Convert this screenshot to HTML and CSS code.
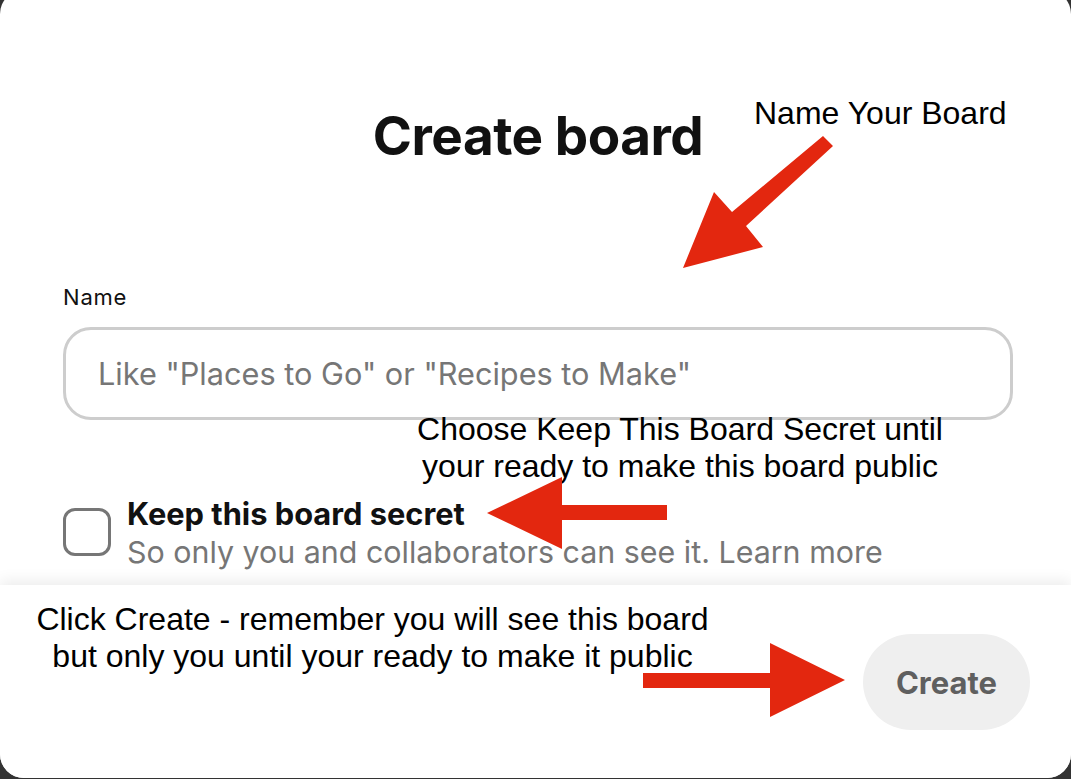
FILE: index.html
```html
<!DOCTYPE html>
<html lang="en">
<head>
    <meta charset="UTF-8">
    <meta name="viewport" content="width=device-width, initial-scale=1.0">
    <title>Create board</title>
    <link rel="stylesheet" href="styles.css">
</head>
<body>
    <div class="modal">
        <div class="modal-body">
            <h1 class="title">Create board</h1>
            <label class="field-label" for="board-name">Name</label>
            <input class="text-input" id="board-name" type="text" placeholder='Like "Places to Go" or "Recipes to Make"'>
            <div class="secret-row">
                <span class="checkbox"></span>
                <div class="secret-text">
                    <div class="secret-title">Keep this board secret</div>
                    <div class="secret-sub">So only you and collaborators can see it. Learn more</div>
                </div>
            </div>
        </div>
        <div class="modal-footer">
            <button class="create-btn">Create</button>
        </div>
    </div>

    <!-- Annotations drawn over the dialog -->
    <div class="note note-name">Name Your Board</div>
    <div class="note note-secret">Choose Keep This Board Secret until<br>your ready to make this board public</div>
    <div class="note note-create">Click Create - remember you will see this board<br>but only you until your ready to make it public</div>
    <svg class="arrows" width="1071" height="779" viewBox="0 0 1071 779">
        <polygon points="823,136 833,146 746,226 763,247 683,268 714,192 732,212" />
        <polygon points="487,513 562,477 562,505 667,505 667,520 562,520 562,549" />
        <polygon points="643,673 770,673 770,643 845,680 770,717 770,688 643,688" />
    </svg>
</body>
</html>
```

FILE: styles.css
```css
html, body {
    margin: 0;
    padding: 0;
    height: 100%;
}
body {
    background: #333333;
    display: flex;
    flex-direction: column;
    position: relative;
    overflow: hidden;
    font-family: Inter, "Noto Sans", sans-serif;
    color: #111111;
}
.modal {
    margin-top: -10px;
    height: 788px;
    width: 100%;
    background: #ffffff;
    border-radius: 24px;
    display: flex;
    flex-direction: column;
    overflow: hidden;
}
.modal-body {
    flex: 1;
    padding: 114px 58px 0 63px;
    display: flex;
    flex-direction: column;
}
.title {
    margin: 0;
    text-align: center;
    font-size: 53px;
    font-weight: 700;
    line-height: 64px;
    letter-spacing: -0.5px;
}
.field-label {
    margin-top: 117px;
    font-size: 22px;
    line-height: 24px;
    letter-spacing: 0.8px;
}
.text-input {
    margin-top: 18px;
    height: 93px;
    box-sizing: border-box;
    border: 3px solid #cdcdcd;
    border-radius: 28px;
    padding: 0 32px;
    font-family: inherit;
    font-size: 30.7px;
    color: #111111;
    outline: none;
}
.text-input::placeholder {
    color: #767676;
}
.secret-row {
    margin-top: 86px;
    display: flex;
    gap: 16px;
}
.checkbox {
    width: 48px;
    height: 48px;
    box-sizing: border-box;
    border: 3px solid #767676;
    border-radius: 12px;
    margin-top: 2px;
    flex-shrink: 0;
}
.secret-title {
    font-size: 30.8px;
    font-weight: 700;
    line-height: 38px;
    margin-top: -11px;
}
.secret-sub {
    font-size: 30.4px;
    line-height: 38px;
    color: #767676;
}
.modal-footer {
    height: 193px;
    box-sizing: border-box;
    padding: 49px 41px 0 0;
    display: flex;
    justify-content: flex-end;
    align-items: flex-start;
    background: #ffffff;
    box-shadow: 0 -4px 14px rgba(0, 0, 0, 0.08);
}
.create-btn {
    height: 96px;
    padding: 0 33px;
    border: none;
    border-radius: 48px;
    background: #efefef;
    color: #5f5f5f;
    font-family: inherit;
    font-size: 31px;
    font-weight: 700;
}
.note {
    position: absolute;
    font-family: "Liberation Sans", Arial, sans-serif;
    font-size: 32px;
    line-height: 37px;
    color: #000000;
    white-space: nowrap;
}
.note-name {
    left: 754px;
    top: 95px;
}
.note-secret {
    left: 380px;
    width: 600px;
    top: 411px;
    text-align: center;
}
.note-create {
    left: 0;
    width: 745px;
    top: 601px;
    text-align: center;
}
.arrows {
    position: absolute;
    left: 0;
    top: 0;
    fill: #e3270f;
}
```
